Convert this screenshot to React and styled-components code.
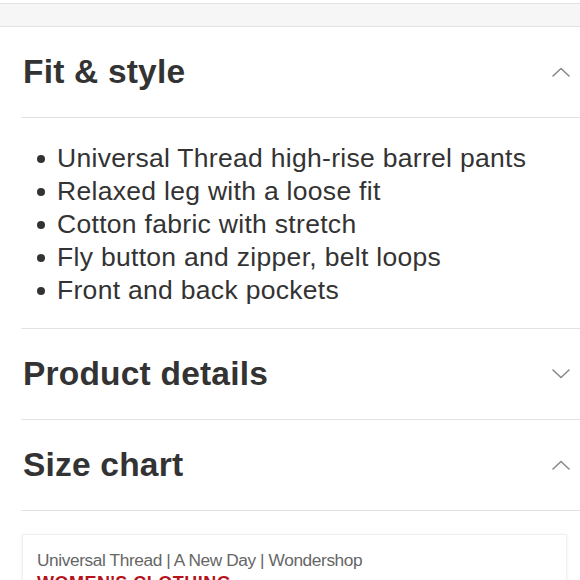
import React from "react";
import styled, { createGlobalStyle } from "styled-components";

const GlobalStyle = createGlobalStyle`
  html, body {
    margin: 0;
    padding: 0;
    background: #fff;
  }
  body {
    font-family: "Liberation Sans", Arial, Helvetica, sans-serif;
    color: #333;
    overflow: hidden;
  }
`;

const Page = styled.div`
  width: 580px;
  height: 580px;
  overflow: hidden;
  padding-top: 3px;
  box-sizing: border-box;
`;

const TopBar = styled.div`
  height: 22px;
  background: #f6f6f6;
  border-top: 1px solid #e2e2e2;
  border-bottom: 1px solid #e2e2e2;
`;

const Section = styled.div`
  margin-left: 21px;
  border-bottom: 1px solid #e2e2e2;
`;

const Header = styled.div`
  height: 90px;
  display: flex;
  align-items: center;
  justify-content: space-between;
  padding-right: 10px;
`;

const Title = styled.h2`
  margin: 0 0 0 2px;
  font-size: 33.5px;
  font-weight: 700;
  color: #333;
  letter-spacing: 0.2px;
`;

const Divider = styled.div`
  height: 1px;
  background: #e2e2e2;
`;

const List = styled.ul`
  list-style: none;
  margin: 0;
  padding: 24px 0 21px 16px;
`;

const Item = styled.li`
  display: flex;
  align-items: center;
  height: 33px;
  font-size: 26.5px;
  letter-spacing: 0.3px;
  color: #333;
`;

const Dot = styled.span`
  width: 8px;
  height: 8px;
  border-radius: 50%;
  background: #333;
  margin-right: 12px;
  flex-shrink: 0;
`;

const Card = styled.div`
  margin: 23px 13px 0 22px;
  padding: 14px 14px;
  background: #fff;
  border: 1px solid #f0f0f0;
  box-shadow: 0 1px 3px rgba(0, 0, 0, 0.08);
`;

const Brands = styled.div`
  font-size: 17.3px;
  letter-spacing: -0.4px;
  color: #666;
  line-height: 23px;
`;

const Category = styled.div`
  font-size: 18px;
  font-weight: 700;
  color: #b5121b;
  line-height: 22px;
  letter-spacing: 0.5px;
`;

const Chevron = ({ up }) => (
  <svg width="18" height="10" viewBox="0 0 18 10" fill="none">
    <path
      d={up ? "M1 9 L9 1.5 L17 9" : "M1 1 L9 8.5 L17 1"}
      stroke="#8a8a8a"
      strokeWidth="1.6"
      strokeLinecap="round"
      strokeLinejoin="round"
    />
  </svg>
);

const bullets = [
  "Universal Thread high-rise barrel pants",
  "Relaxed leg with a loose fit",
  "Cotton fabric with stretch",
  "Fly button and zipper, belt loops",
  "Front and back pockets",
];

export default function App() {
  return (
    <>
      <GlobalStyle />
      <Page>
        <TopBar />
        <Section>
          <Header>
            <Title>Fit &amp; style</Title>
            <Chevron up />
          </Header>
          <Divider />
          <List>
            {bullets.map((b) => (
              <Item key={b}>
                <Dot />
                {b}
              </Item>
            ))}
          </List>
        </Section>
        <Section>
          <Header>
            <Title>Product details</Title>
            <Chevron />
          </Header>
        </Section>
        <Section>
          <Header>
            <Title>Size chart</Title>
            <Chevron up />
          </Header>
        </Section>
        <Card>
          <Brands>Universal Thread | A New Day | Wondershop</Brands>
          <Category>WOMEN'S CLOTHING</Category>
        </Card>
      </Page>
    </>
  );
}
